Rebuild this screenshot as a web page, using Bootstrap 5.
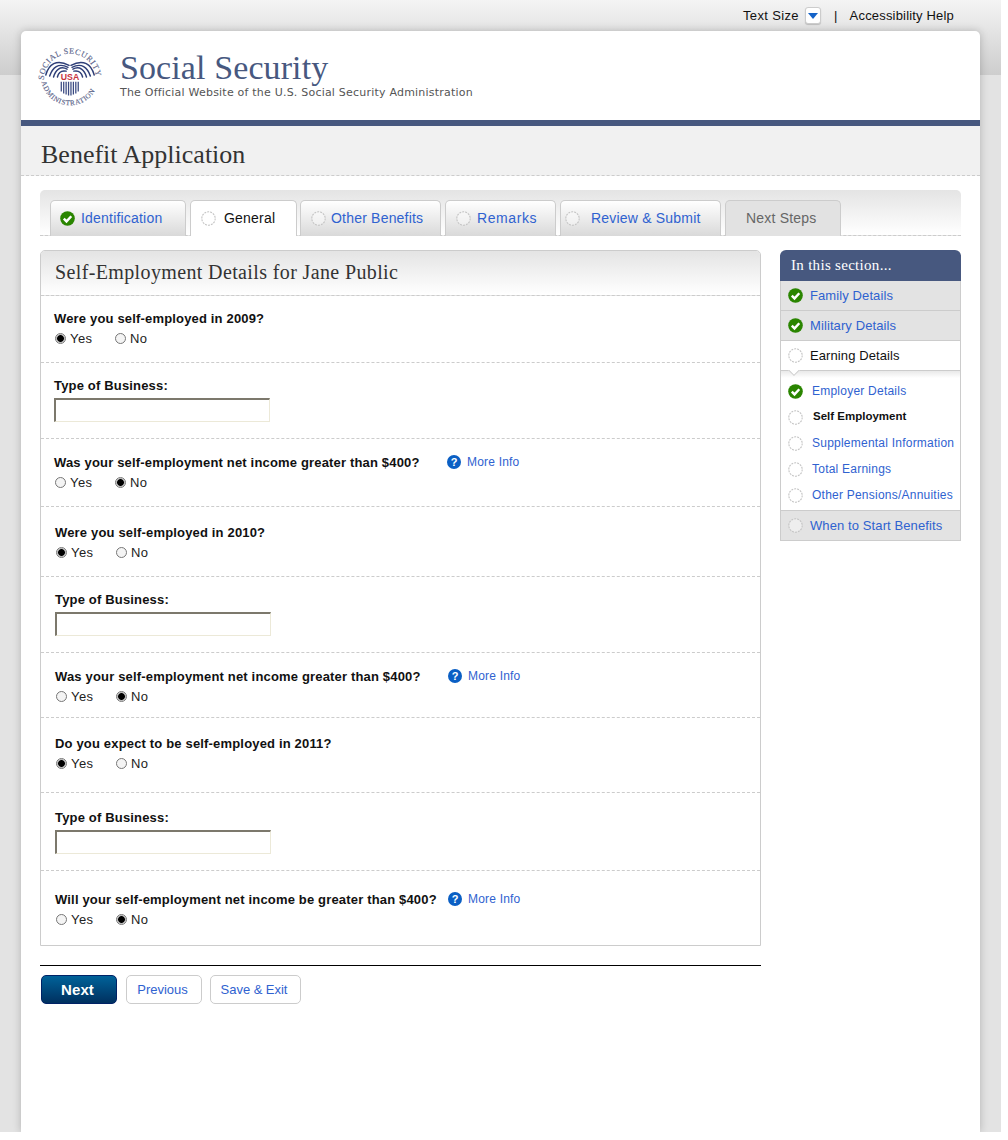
<!DOCTYPE html>
<html lang="en">
<head>
<meta charset="utf-8">
<title>Benefit Application</title>
<link href="https://cdn.jsdelivr.net/npm/bootstrap@5.3.0/dist/css/bootstrap.min.css" rel="stylesheet">
<style>
body{margin:0;background:#fff;font-family:"Liberation Sans",Arial,sans-serif;color:#111;font-size:12px}
a{color:#2f62d0;text-decoration:none}
.frame{width:1001px;height:1132px;overflow:hidden;background:#e3e3e3 linear-gradient(#f4f4f4,#cdcdcd) no-repeat 0 0/100% 75px}
.topbar{height:31px;padding-right:47px;font-size:13px;letter-spacing:.35px;color:#111}
.topbar a{color:#111;letter-spacing:.18px;margin-left:12px}
.sizebtn{width:16px;height:17px;background:#fff;border:1px solid #ccc;border-radius:3px;margin:0 13px 0 6px;box-shadow:0 1px 1px #bbb}
.sizebtn i{border:5px solid transparent;border-top:6px solid #1463c8;border-bottom:0}
.sheet{margin:0 21px;width:959px;height:1101px;background:#fff;border-radius:5px 5px 0 0;box-shadow:0 0 9px rgba(0,0,0,.22)}
.brand{height:89px;padding-left:18px}
.brand-t{margin-left:19px;margin-bottom:2px}
.brand-n{font-family:"Liberation Serif",serif;font-size:34px;line-height:34px;color:#47587f;letter-spacing:.1px}
.brand-s{font-family:"DejaVu Sans",sans-serif;font-size:11px;line-height:13px;margin-top:1px;color:#555;letter-spacing:.21px}
.apptitle{box-sizing:content-box;height:35px;padding:14px 0 0 20px;background:#f1f1f1;border-top:6px solid #47587f;border-bottom:1px dashed #ccc;font-family:"Liberation Serif",serif;font-size:26px;line-height:30px;color:#333}
.bodywrap{padding:14px 19px 0 19px}
.tabstrip{height:46px;background:linear-gradient(#e4e4e4,#fff);border-radius:5px 5px 0 0;border-bottom:1px dashed #ccc;padding:10px 0 0 10px;gap:4px}
.tb{height:36px;margin-bottom:-1px;border:1px solid #ccc;border-bottom:0;border-radius:5px 5px 0 0;background:linear-gradient(#fff,#d9d9d9);font-size:14px;letter-spacing:.2px;line-height:34px;padding-left:9px;gap:6px;white-space:nowrap}
.tb.t1{width:136px}.tb.t2{width:107px;background:#fff;color:#111;padding-left:10px;gap:8px}.tb.t3{width:141px;margin-left:-1px;padding-left:10px;gap:5px}.tb.t4{width:111px;padding-left:10px;letter-spacing:.6px}.tb.t5{width:161px;padding-left:4px;gap:11px}.tb.t6{width:116px;background:#e2e2e2;color:#666;padding-left:20px}
.cols{margin-top:14px;gap:19px}
.maincol{width:721px}
.sidecol{width:181px}
.panel-q{border:1px solid #ccc;border-radius:5px 5px 0 0}
.panel-h{height:45px;background:linear-gradient(#e4e4e4,#fff);border-bottom:1px dashed #ccc;padding-left:14px;font-family:"Liberation Serif",serif;font-size:20px;line-height:43px;color:#333;letter-spacing:.37px;border-radius:4px 4px 0 0}
.q{border-bottom:1px dashed #ccc;padding-left:13px}
.q.alt{padding-left:14px}
.q:last-child{border-bottom:0}
.q1{padding-top:13px;padding-bottom:14px}.q2{padding-top:13px;padding-bottom:16px}.q3{padding-top:14px;padding-bottom:14px}.q4{padding-top:16px;padding-bottom:14px}.q5{padding-top:13px;padding-bottom:16px}.q6{padding-top:14px;padding-bottom:11px}.q7{padding-top:16px;padding-bottom:19px}.q8{padding-top:15px;padding-bottom:16px}.q9{padding-top:19px;padding-bottom:16px}
.qlabel{font-weight:700;font-size:13px;line-height:20px;height:18px;letter-spacing:.17px;color:#111;width:393px;white-space:nowrap;margin:0;display:block}
.radios{height:20px;margin-top:1px;padding-left:1px;font-size:13px;letter-spacing:.45px;color:#222}
.radios label{display:flex;align-items:center;gap:4px;width:60px;margin:0;padding-top:2px}
.rb{appearance:none;-webkit-appearance:none;width:11px;height:11px;margin:0 0 2px;border-radius:50%;border:1px solid #777;background:#f4f4f4}
.rb:checked{background:radial-gradient(circle,#000 0,#000 3px,#999 3.6px,#eee 4.6px)}
.txtbox{width:216px;height:24px;margin-top:4px;padding:0;border-style:solid;border-width:2px 1px 1px 2px;border-color:#7c786c #ece9d8 #ece9d8 #7c786c;border-radius:0;background:#fff;display:block}
.minfo{font-size:12px;letter-spacing:.2px;gap:6px;line-height:18px}
.helpi{width:14px;height:14px;border-radius:50%;background:#0a5fc4;color:#fff;font-weight:700;font-size:11px;line-height:14px;text-align:center;letter-spacing:0}
.rule-b{border-top:1px solid #000;margin-top:19px;padding:9px 0 0 1px;gap:9px}
.bt{height:29px;width:76px;border:1px solid #ccc;border-radius:5px;background:#fff;color:#2f62d0;font-size:13px;letter-spacing:-.04px;line-height:27px;padding:0 3px 0 0;text-align:center}
.bt.pri{background:linear-gradient(#006299,#00305f);border-color:#002266;color:#fff;font-weight:700;font-size:15px;letter-spacing:.1px}
.bt.sv{width:91px;margin-left:-1px}
.side-h{height:31px;background:#47587f;color:#fff;border-radius:6px 6px 0 0;font-family:"Liberation Serif",serif;font-size:15px;line-height:30px;padding-left:11px;letter-spacing:.3px}
.side-i{height:30px;background:#e3e3e3;border:1px solid #ccc;border-top:0;padding-left:7px;gap:7px;font-size:13px;letter-spacing:.1px;line-height:29px}
.side-i.on{background:#fff;color:#111}
.side-sub{height:140px;border:1px solid #ccc;border-top:0;padding-top:7px;position:relative;background:linear-gradient(#e9e9e9,#fff 7px) no-repeat 0 0/100% 8px}
.notch{position:absolute;left:6px;top:-1px;width:14px;height:8px;overflow:hidden}
.notch:after{content:"";position:absolute;left:2px;top:-6px;width:10px;height:10px;transform:rotate(45deg);background:#fff;border:1px solid #ccc}
.sub-i{height:26px;padding-left:7px;gap:9px;font-size:12px;letter-spacing:.23px;white-space:nowrap}
.sub-i.cur{font-weight:700;color:#111;letter-spacing:0;font-size:11.5px;gap:10px}
.ico{width:15px;height:15px;flex:none;display:block}
.logo{flex:none;overflow:visible}
</style>
</head>
<body>
<svg width="0" height="0" class="d-block">
<defs>
<g id="ok"><circle cx="7.5" cy="7.5" r="7.3" fill="#2a8500"/><path d="M3.8 7.6l2.7 2.8 4.8-5.2" fill="none" stroke="#fff" stroke-width="2.4"/></g>
<g id="todo"><circle cx="7.5" cy="7.5" r="6.7" fill="#fff" fill-opacity=".4" stroke="#c4c4c4" stroke-width="1.1" stroke-dasharray="2 1"/></g>
</defs>
</svg>
<div class="frame">
  <div class="topbar d-flex align-items-center justify-content-end">
    <span>Text Size</span>
    <span class="sizebtn d-flex align-items-center justify-content-center"><i></i></span>
    <span>|</span>
    <a href="#">Accessibility Help</a>
  </div>
  <div class="sheet">
    <div class="brand d-flex align-items-center">
      <svg class="logo" width="62" height="62" viewBox="0 0 64 64">
        <defs>
          <path id="arcT" d="M5 36A27 27 0 0 1 59 36"/>
          <path id="arcB" d="M2.500 36A29.700 29.700 0 0 0 61.500 36"/>
        </defs>
        <text font-family="Liberation Serif,serif" font-size="8.4" fill="#5b648a" stroke="#5b648a" stroke-width=".15" letter-spacing=".55"><textPath href="#arcT">SOCIAL SECURITY</textPath></text>
        <text font-family="Liberation Serif,serif" font-size="7.4" fill="#5b648a" stroke="#5b648a" stroke-width=".15" letter-spacing=".65"><textPath href="#arcB" startOffset="2">ADMINISTRATION</textPath></text>
        <g fill="none" stroke="#2f3f78" stroke-width="1.5" stroke-linecap="round">
          <path d="M7 31C10 20 18 14 31 21"/><path d="M11 32C14 23 20 18 30 23"/><path d="M15 33C17 26 22 21 29 25"/><path d="M19 33C20 29 23 26 28 27"/>
          <path d="M57 31C54 20 46 14 33 21"/><path d="M53 32C50 23 44 18 34 23"/><path d="M49 33C47 26 42 21 35 25"/><path d="M45 33C44 29 41 26 36 27"/>
        </g>
        <text x="32" y="36.500" text-anchor="middle" font-family="Liberation Sans,sans-serif" font-weight="700" font-size="9" fill="#c8343f">USA</text>
        <g stroke="#3a4a82" stroke-width="1.300"><path d="M23 38v10M25.500 38v12M28 38v13M30.500 38v14M33 38v14M35.500 38v13M38 38v12M40.500 38v10"/></g>
      </svg>
      <div class="brand-t">
        <div class="brand-n">Social Security</div>
        <div class="brand-s">The Official Website of the U.S. Social Security Administration</div>
      </div>
    </div>
    <div class="apptitle">Benefit Application</div>
    <div class="bodywrap">
      <div class="tabstrip d-flex">
        <a href="#" class="tb t1 d-flex"><svg class="ico align-self-center"><use href="#ok"/></svg>Identification</a>
        <a href="#" class="tb t2 d-flex"><svg class="ico align-self-center"><use href="#todo"/></svg>General</a>
        <a href="#" class="tb t3 d-flex"><svg class="ico align-self-center"><use href="#todo"/></svg>Other Benefits</a>
        <a href="#" class="tb t4 d-flex"><svg class="ico align-self-center"><use href="#todo"/></svg>Remarks</a>
        <a href="#" class="tb t5 d-flex"><svg class="ico align-self-center"><use href="#todo"/></svg>Review &amp; Submit</a>
        <span class="tb t6 d-flex">Next Steps</span>
      </div>
      <div class="cols d-flex align-items-start">
        <div class="maincol">
          <div class="panel-q">
            <div class="panel-h">Self-Employment Details for Jane Public</div>
            <div class="q q1">
              <span class="qlabel">Were you self-employed in 2009?</span>
              <div class="radios d-flex"><label><input class="rb" type="radio" name="a1" checked>Yes</label><label><input class="rb" type="radio" name="a1">No</label></div>
            </div>
            <div class="q q2">
              <label class="qlabel" for="b1">Type of Business:</label>
              <input id="b1" class="txtbox" type="text">
            </div>
            <div class="q q3">
              <div class="d-flex"><span class="qlabel">Was your self-employment net income greater than $400?</span><a href="#" class="minfo d-flex align-items-center"><span class="helpi">?</span>More Info</a></div>
              <div class="radios d-flex"><label><input class="rb" type="radio" name="a2">Yes</label><label><input class="rb" type="radio" name="a2" checked>No</label></div>
            </div>
            <div class="q q4 alt">
              <span class="qlabel">Were you self-employed in 2010?</span>
              <div class="radios d-flex"><label><input class="rb" type="radio" name="a3" checked>Yes</label><label><input class="rb" type="radio" name="a3">No</label></div>
            </div>
            <div class="q q5 alt">
              <label class="qlabel" for="b2">Type of Business:</label>
              <input id="b2" class="txtbox" type="text">
            </div>
            <div class="q q6 alt">
              <div class="d-flex"><span class="qlabel">Was your self-employment net income greater than $400?</span><a href="#" class="minfo d-flex align-items-center"><span class="helpi">?</span>More Info</a></div>
              <div class="radios d-flex"><label><input class="rb" type="radio" name="a4">Yes</label><label><input class="rb" type="radio" name="a4" checked>No</label></div>
            </div>
            <div class="q q7 alt">
              <span class="qlabel">Do you expect to be self-employed in 2011?</span>
              <div class="radios d-flex"><label><input class="rb" type="radio" name="a5" checked>Yes</label><label><input class="rb" type="radio" name="a5">No</label></div>
            </div>
            <div class="q q8 alt">
              <label class="qlabel" for="b3">Type of Business:</label>
              <input id="b3" class="txtbox" type="text">
            </div>
            <div class="q q9 alt">
              <div class="d-flex"><span class="qlabel">Will your self-employment net income be greater than $400?</span><a href="#" class="minfo d-flex align-items-center"><span class="helpi">?</span>More Info</a></div>
              <div class="radios d-flex"><label><input class="rb" type="radio" name="a6">Yes</label><label><input class="rb" type="radio" name="a6" checked>No</label></div>
            </div>
          </div>
          <div class="rule-b d-flex">
            <button class="btn bt pri" type="button">Next</button>
            <button class="btn bt" type="button">Previous</button>
            <button class="btn bt sv" type="button">Save &amp; Exit</button>
          </div>
        </div>
        <div class="sidecol">
          <div class="side-h">In this section...</div>
          <a href="#" class="side-i d-flex"><svg class="ico align-self-center"><use href="#ok"/></svg>Family Details</a>
          <a href="#" class="side-i d-flex"><svg class="ico align-self-center"><use href="#ok"/></svg>Military Details</a>
          <div class="side-i on d-flex"><svg class="ico align-self-center"><use href="#todo"/></svg>Earning Details</div>
          <div class="side-sub">
            <span class="notch"></span>
            <a href="#" class="sub-i d-flex align-items-center"><svg class="ico"><use href="#ok"/></svg>Employer Details</a>
            <div class="sub-i cur d-flex align-items-center"><svg class="ico"><use href="#todo"/></svg>Self Employment</div>
            <a href="#" class="sub-i d-flex align-items-center"><svg class="ico"><use href="#todo"/></svg>Supplemental Information</a>
            <a href="#" class="sub-i d-flex align-items-center"><svg class="ico"><use href="#todo"/></svg>Total Earnings</a>
            <a href="#" class="sub-i d-flex align-items-center"><svg class="ico"><use href="#todo"/></svg>Other Pensions/Annuities</a>
          </div>
          <a href="#" class="side-i d-flex"><svg class="ico align-self-center"><use href="#todo"/></svg>When to Start Benefits</a>
        </div>
      </div>
    </div>
  </div>
</div>
<script src="https://cdn.jsdelivr.net/npm/bootstrap@5.3.0/dist/js/bootstrap.bundle.min.js"></script>
</body>
</html>
